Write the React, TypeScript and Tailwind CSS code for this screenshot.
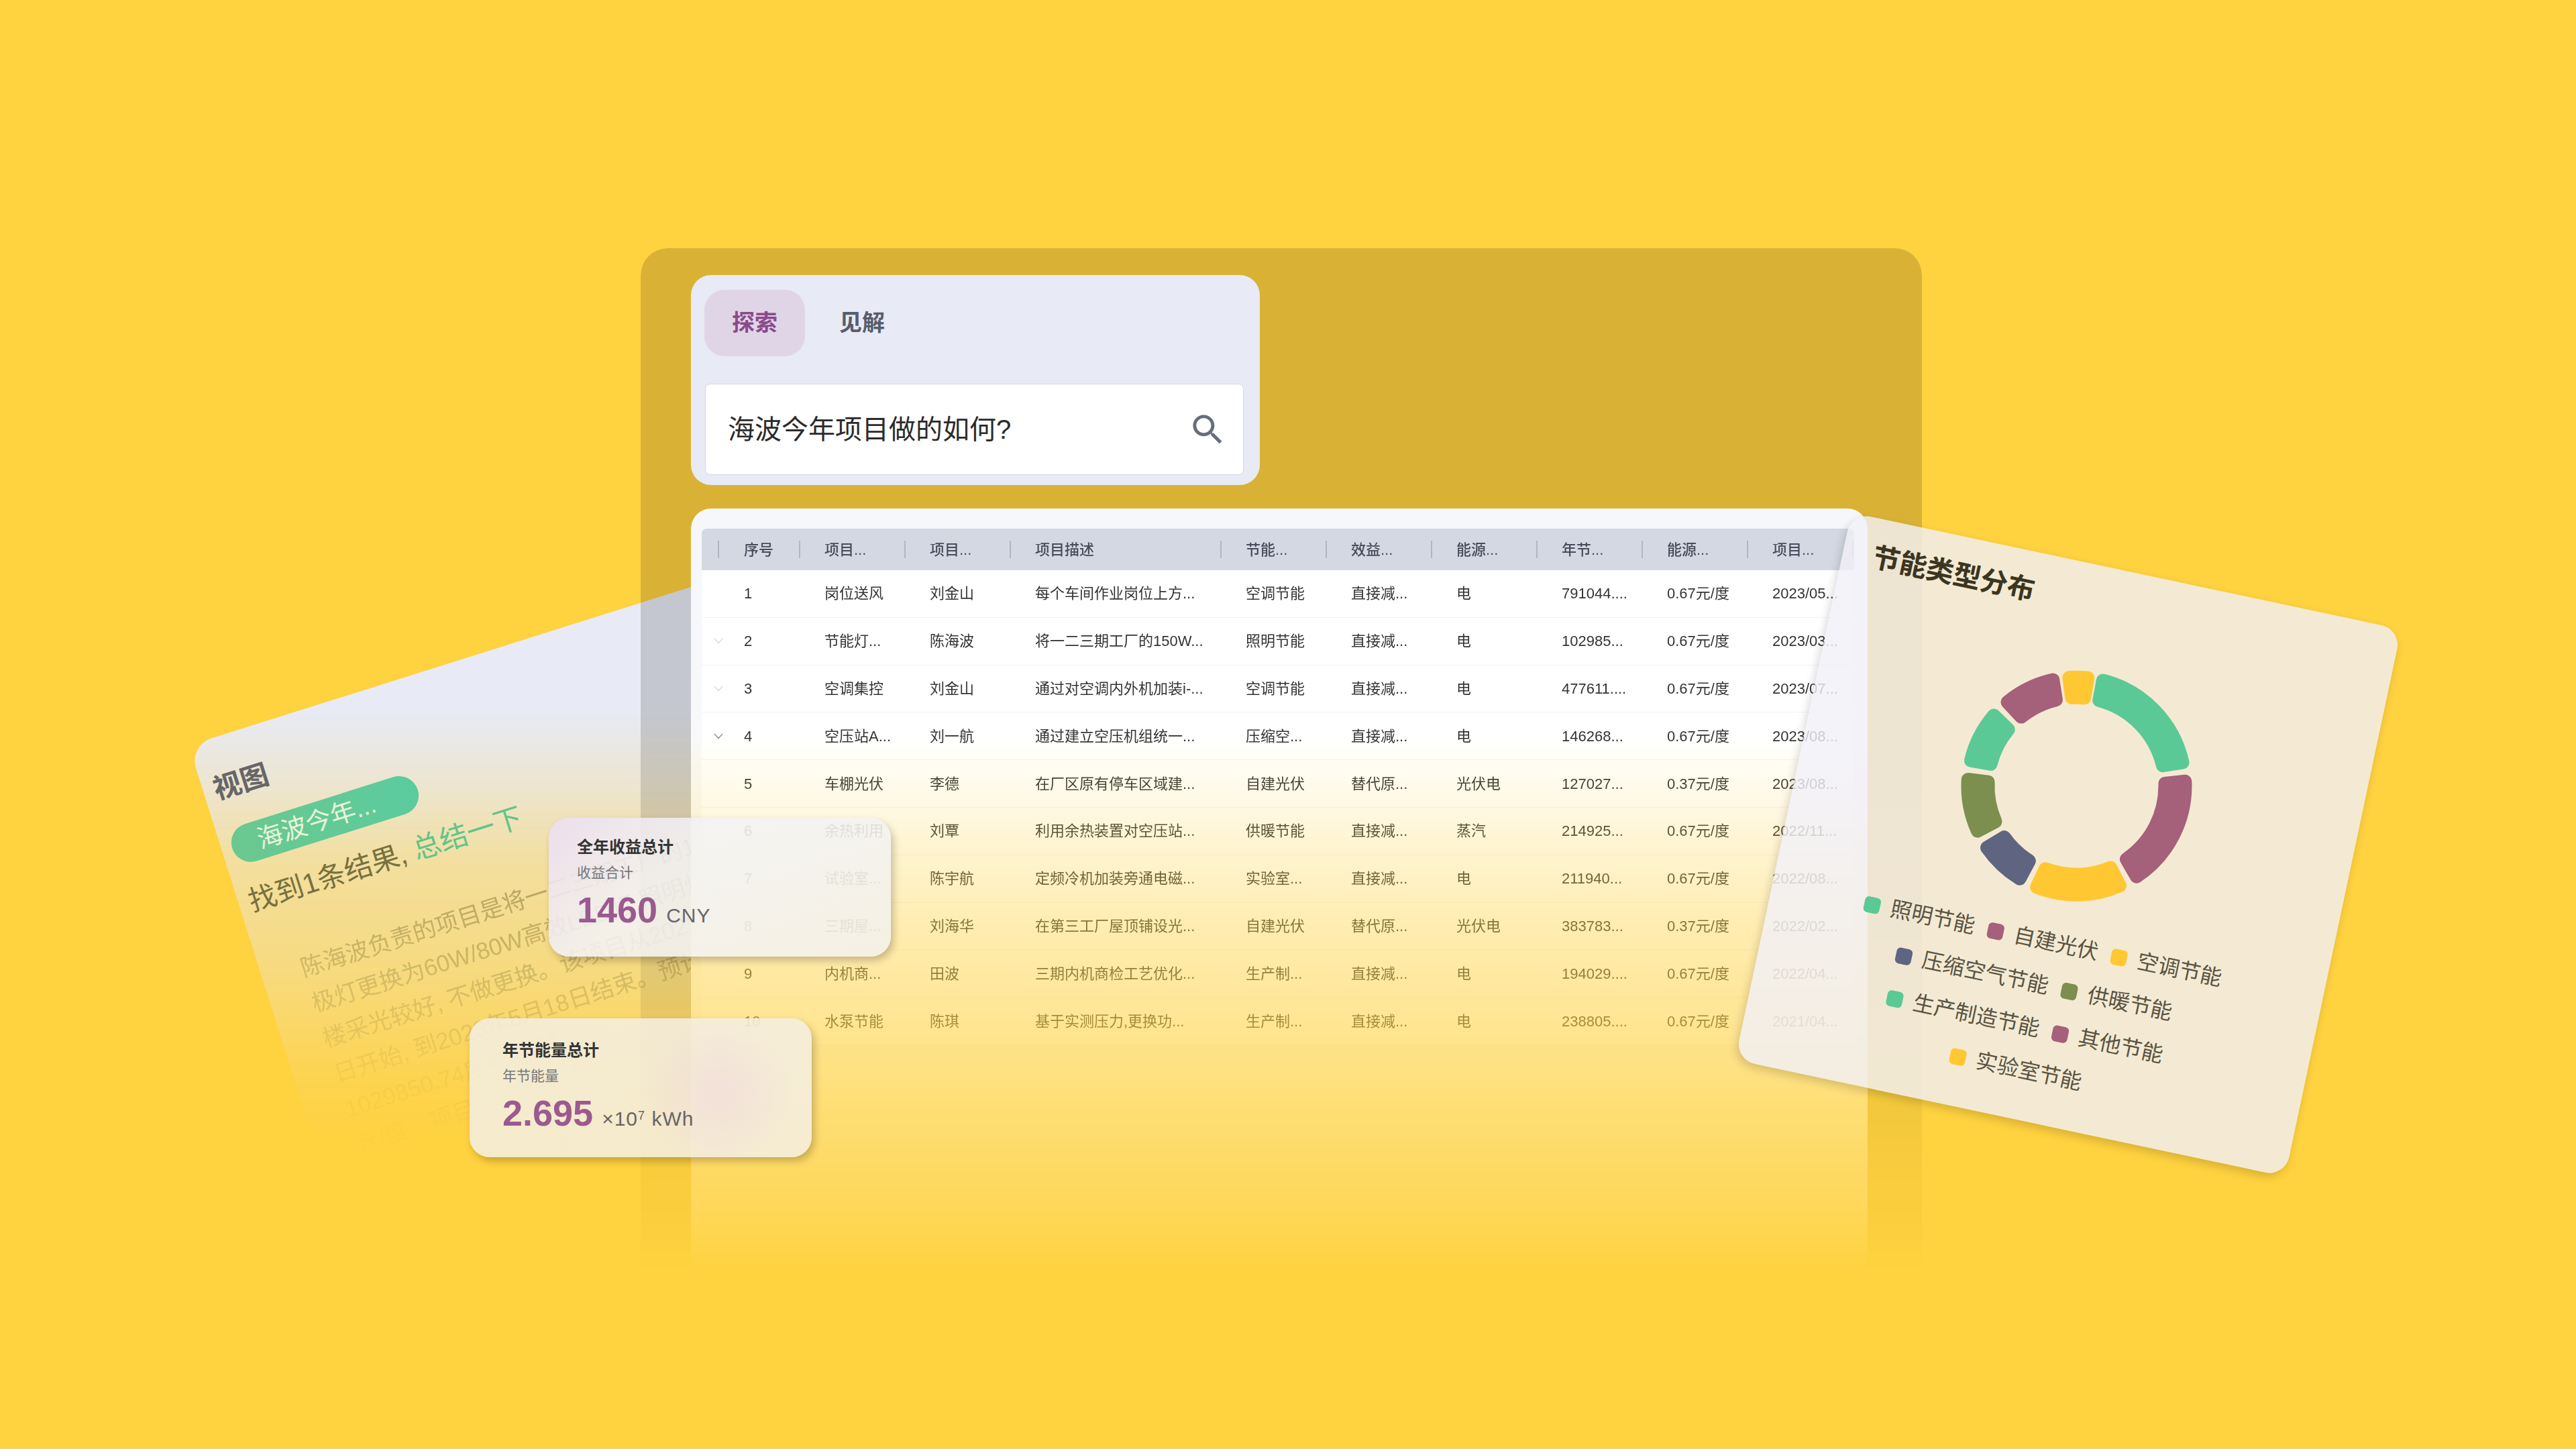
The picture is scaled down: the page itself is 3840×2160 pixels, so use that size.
const headers = ['项目...', '项目...', '项目描述', '节能...', '效益...', '能源...', '年节...', '能源...', '项目...'];

const rows = [
  ['1', '岗位送风', '刘金山', '每个车间作业岗位上方...', '空调节能', '直接减...', '电', '791044....', '0.67元/度', '2023/05...'],
  ['2', '节能灯...', '陈海波', '将一二三期工厂的150W...', '照明节能', '直接减...', '电', '102985...', '0.67元/度', '2023/03...'],
  ['3', '空调集控', '刘金山', '通过对空调内外机加装i-...', '空调节能', '直接减...', '电', '477611....', '0.67元/度', '2023/07...'],
  ['4', '空压站A...', '刘一航', '通过建立空压机组统一...', '压缩空...', '直接减...', '电', '146268...', '0.67元/度', '2023/08...'],
  ['5', '车棚光伏', '李德', '在厂区原有停车区域建...', '自建光伏', '替代原...', '光伏电', '127027...', '0.37元/度', '2023/08...'],
  ['6', '余热利用', '刘覃', '利用余热装置对空压站...', '供暖节能', '直接减...', '蒸汽', '214925...', '0.67元/度', '2022/11...'],
  ['7', '试验室...', '陈宇航', '定频冷机加装旁通电磁...', '实验室...', '直接减...', '电', '211940...', '0.67元/度', '2022/08...'],
  ['8', '三期屋...', '刘海华', '在第三工厂屋顶铺设光...', '自建光伏', '替代原...', '光伏电', '383783...', '0.37元/度', '2022/02...'],
  ['9', '内机商...', '田波', '三期内机商检工艺优化...', '生产制...', '直接减...', '电', '194029....', '0.67元/度', '2022/04...'],
  ['10', '水泵节能', '陈琪', '基于实测压力,更换功...', '生产制...', '直接减...', '电', '238805....', '0.67元/度', '2021/04...'],
];

const legend = [
  ['照明节能', 'bg-[#5bc995]'],
  ['自建光伏', 'bg-[#a5607a]'],
  ['空调节能', 'bg-[#ffc833]'],
  ['压缩空气节能', 'bg-[#5f6480]'],
  ['供暖节能', 'bg-[#7c8f4e]'],
  ['生产制造节能', 'bg-[#5bc995]'],
  ['其他节能', 'bg-[#a5607a]'],
  ['实验室节能', 'bg-[#ffc833]'],
];

// start / end angle in degrees, clockwise from the top of the page
const segments: [number, number, string][] = [
  [-7.5, 9.5, '#ffc833'],
  [10.5, 81, '#5bc995'],
  [84, 150, '#a5607a'],
  [153, 205, '#ffc833'],
  [208, 239, '#5f6480'],
  [242, 277, '#7c8f4e'],
  [280, 314, '#5bc995'],
  [317, 351, '#a5607a'],
];

const sector = (start: number, end: number) => {
  const outer = 162;
  const inner = 132;
  const point = (deg: number, r: number) => {
    const rad = ((deg - 90) * Math.PI) / 180;
    return `${180 + r * Math.cos(rad)} ${180 + r * Math.sin(rad)}`;
  };
  const a0o = start + (10 / outer) * 57.3;
  const a1o = end - (10 / outer) * 57.3;
  const a0i = start + (10 / inner) * 57.3;
  const a1i = end - (10 / inner) * 57.3;
  return `M${point(a0o, outer)} A${outer} ${outer} 0 0 1 ${point(a1o, outer)} L${point(a1i, inner)} A${inner} ${inner} 0 0 0 ${point(a0i, inner)} Z`;
};

const Chevron = ({ className }: { className: string }) => (
  <svg viewBox="0 0 14 9" className={`w-[14px] h-[9px] ${className}`} fill="none" stroke="currentColor" strokeWidth="1.6">
    <path d="M1 1l6 6.5L13 1" />
  </svg>
);

const Divider = () => <span className="w-[2px] h-[26px] bg-[#b1b6c2] shrink-0"></span>;

const SearchPanel = () => (
  <div className="w-[848px] h-[313px] rounded-[30px] bg-[#e8eaf5] pl-[20px] pt-[22px]">
    <div className="flex gap-[10px] text-[34px] font-bold leading-[99px] text-center">
      <div className="w-[150px] h-[99px] rounded-[30px] bg-[#e0d5e6] text-[#8b4a8c]">探索</div>
      <div className="w-[150px] h-[99px] text-[#565d6c]">见解</div>
    </div>
    <div className="mt-[41px] ml-px w-[803px] h-[136px] flex items-center justify-between pl-[33px] pr-[23px] bg-white border border-[#d8d9e2] rounded-[8px]">
      <span className="text-[40px] text-[#2b2b2b]">海波今年项目做的如何?</span>
      <svg viewBox="0 0 24 24" className="w-[59px] h-[59px] text-[#666e7a]" fill="currentColor">
        <path d="M15.5 14h-.79l-.28-.27C15.41 12.59 16 11.11 16 9.5 16 5.91 13.09 3 9.5 3S3 5.91 3 9.5 5.91 16 9.5 16c1.61 0 3.09-.59 4.23-1.57l.27.28v.79l5 4.99L20.49 19l-4.99-5zm-6 0C7.01 14 5 11.99 5 9.5S7.01 5 9.5 5 14 7.01 14 9.5 11.99 14 9.5 14z" />
      </svg>
    </div>
  </div>
);

const DataTable = () => (
  // yellow underlay keeps the panel tint from greying the faded part of the table
  <div className="mt-[35px] w-[1754px] h-[1142px] rounded-[30px] bg-[#ffd23f]">
    <div className="h-full rounded-[30px] bg-[linear-gradient(to_bottom,#f6f7fb,#f6f7fb_10%,#fcfbf6_65%)] pl-[16px] pt-[30px] [mask-image:linear-gradient(to_bottom,black_30%,rgba(0,0,0,0.6)_54%,rgba(0,0,0,0.4)_70%,rgba(0,0,0,0.25)_82%,rgba(0,0,0,0.15)_91%,transparent_100%)]">
      {/* Header */}
      <div className="w-[1718px] h-[62px] flex items-center rounded-t-[8px] bg-[#d4d8e2] text-[22px] font-medium text-[#454c5b]">
        <div className="w-[145px] flex items-center pl-[24px]">
          <Divider />
          <span className="ml-[37px]">序号</span>
        </div>
        {headers.map((h, i) => (
          <div key={i} className={`${i === 2 ? 'w-[314px]' : 'w-[157px]'} flex items-center`}>
            <Divider />
            <span className="ml-[36px]">{h}</span>
          </div>
        ))}
        <Divider />
      </div>

      {/* Rows */}
      <div className="w-[1718px] bg-white text-[22px] text-[#333333]">
        {rows.map((row, r) => (
          <div key={r} className="h-[70.8px] flex items-center border-b border-[#f3f3f3]">
            <div className="w-[145px] flex items-center pl-[18px]">
              <span className="w-[14px] flex">
                {r === 1 || r === 2 ? <Chevron className="text-[#dddddd]" /> : null}
                {r === 3 ? <Chevron className="text-[#999999]" /> : null}
              </span>
              <span className="ml-[31px]">{row[0]}</span>
            </div>
            {row.slice(1).map((cell, i) => (
              <div key={i} className={`${i === 2 ? 'w-[314px]' : 'w-[157px]'} pl-[38px] whitespace-nowrap`}>
                {cell}
              </div>
            ))}
          </div>
        ))}
      </div>
    </div>
  </div>
);

const ViewCard = () => (
  <div className="absolute left-[281px] top-[1111px] w-[1000px] h-[700px] origin-top-left rotate-[-17.5deg] pl-[16px] pt-[50px]">
    {/* fades straight down the page, not along the tilted card */}
    <div className="absolute inset-0 rounded-[36px] bg-[#e8eaf5] [mask-image:linear-gradient(197.5deg,black_26%,rgba(0,0,0,0.8)_37%,rgba(0,0,0,0.53)_49%,rgba(0,0,0,0.35)_66%,rgba(0,0,0,0.1)_82%,transparent_92%)]"></div>
    <div className="relative">
      <div className="text-[42px] leading-[52px] font-semibold text-[#666666]">视图</div>
      <div className="mt-[35px] w-[290px] h-[58px] rounded-full bg-[linear-gradient(to_right,#6bc88f,#5bcb9e)] pl-[40px] text-[38px] leading-[58px] text-[#e9f4d6]">
        海波今年...
      </div>
      <div className="mt-[28px] h-[56px] text-[42px] leading-[56px] text-[#77713f] whitespace-nowrap">
        找到1条结果, <span className="text-[#62c48a]">总结一下</span>
      </div>
      <div className="mt-[62px] ml-[44px] w-[900px] h-[330px] text-[35px] leading-[55px] text-[#776f30] whitespace-nowrap [mask-image:linear-gradient(197.5deg,rgba(0,0,0,0.6),rgba(0,0,0,0.48)_33%,rgba(0,0,0,0.3)_51%,rgba(0,0,0,0.08)_76%,rgba(0,0,0,0.02)_91%,transparent)]">
        <div>陈海波负责的项目是将一二三期工厂的150W</div>
        <div>极灯更换为60W/80W高效LED灯,照明灯</div>
        <div>楼采光较好, 不做更换。该项目从2022年</div>
        <div>日开始, 到2023年5月18日结束。预计</div>
        <div>1029850.74度电,能源</div>
        <div>元/度。项目预计可节约</div>
      </div>
    </div>
  </div>
);

const ChartCard = () => (
  <div className="absolute left-[2664px] top-[842px] w-[838px] h-[834px] rotate-[12deg] rounded-[30px] bg-[rgba(241,240,249,0.8)] shadow-[-2px_6px_14px_rgba(0,0,0,0.16)] pl-[45px] pt-[33px]">
    <div className="text-[41px] leading-[50px] font-bold text-[#3b3520]">节能类型分布</div>
    <svg viewBox="0 0 360 360" className="mt-[66px] ml-[188px] w-[360px] h-[360px]">
      <g transform="rotate(-12 180 180)">
        {segments.map(([a, b, color], i) => (
          <path key={i} d={sector(a, b)} fill={color} stroke={color} strokeWidth="20" strokeLinejoin="round" />
        ))}
      </g>
    </svg>
    <div className="mt-[24px] ml-[67px] w-[600px] flex flex-wrap justify-center gap-x-[20px] text-[32px] leading-[65px] text-[#5a5443]">
      {legend.map(([name, color]) => (
        <div key={name} className="flex items-center gap-[16px]">
          <span className={`w-[24px] h-[24px] rounded-[6px] ${color}`}></span>
          {name}
        </div>
      ))}
    </div>
  </div>
);

const StatCard = ({ className, title, sub, value, unit }: { className: string; title: string; sub: string; value: string; unit: React.ReactNode }) => (
  <div className={`absolute w-[510px] h-[207px] rounded-[30px] shadow-[4px_6px_12px_rgba(0,0,0,0.22)] ${className}`}>
    <div className="text-[24px] leading-[34px] font-bold text-[#333333]">{title}</div>
    <div className="mt-[6px] text-[21px] leading-[30px] text-[#777777]">{sub}</div>
    <div className="mt-[10px] flex items-baseline leading-[60px]">
      <span className="text-[54px] font-bold text-[#9b5a8f]">{value}</span>
      <span className="ml-[13px] text-[30px] tracking-[1px] text-[#666666]">{unit}</span>
    </div>
  </div>
);

export default function App() {
  return (
    <div className="relative w-[3840px] h-[2160px] overflow-hidden bg-[#ffd23f] pl-[955px] pt-[370px] font-['Liberation_Sans','Noto_Sans_CJK_SC',sans-serif]">
      <ViewCard />

      <div className="relative w-[1910px] h-[1530px] pl-[75px] pt-[40px]">
        <div className="absolute inset-0 rounded-t-[40px] bg-[rgba(0,0,0,0.15)] [mask-image:linear-gradient(to_bottom,black_47%,transparent_100%)]"></div>
        <div className="relative">
          <SearchPanel />
          <DataTable />
        </div>
      </div>

      <ChartCard />

      <StatCard
        className="left-[818px] top-[1219px] pl-[42px] pt-[27px] bg-[linear-gradient(135deg,rgba(236,222,240,0.93),rgba(243,243,245,0.87)_35%,rgba(243,241,236,0.87))]"
        title="全年收益总计"
        sub="收益合计"
        value="1460"
        unit="CNY"
      />
      <StatCard
        className="left-[700px] top-[1518px] pl-[49px] pt-[31px] bg-[radial-gradient(circle_at_73%_53%,rgba(241,225,228,0.9),rgba(244,238,224,0.88)_110px)]"
        title="年节能量总计"
        sub="年节能量"
        value="2.695"
        unit={
          <>
            ×10<sup className="text-[18px]">7</sup> kWh
          </>
        }
      />
    </div>
  );
}
